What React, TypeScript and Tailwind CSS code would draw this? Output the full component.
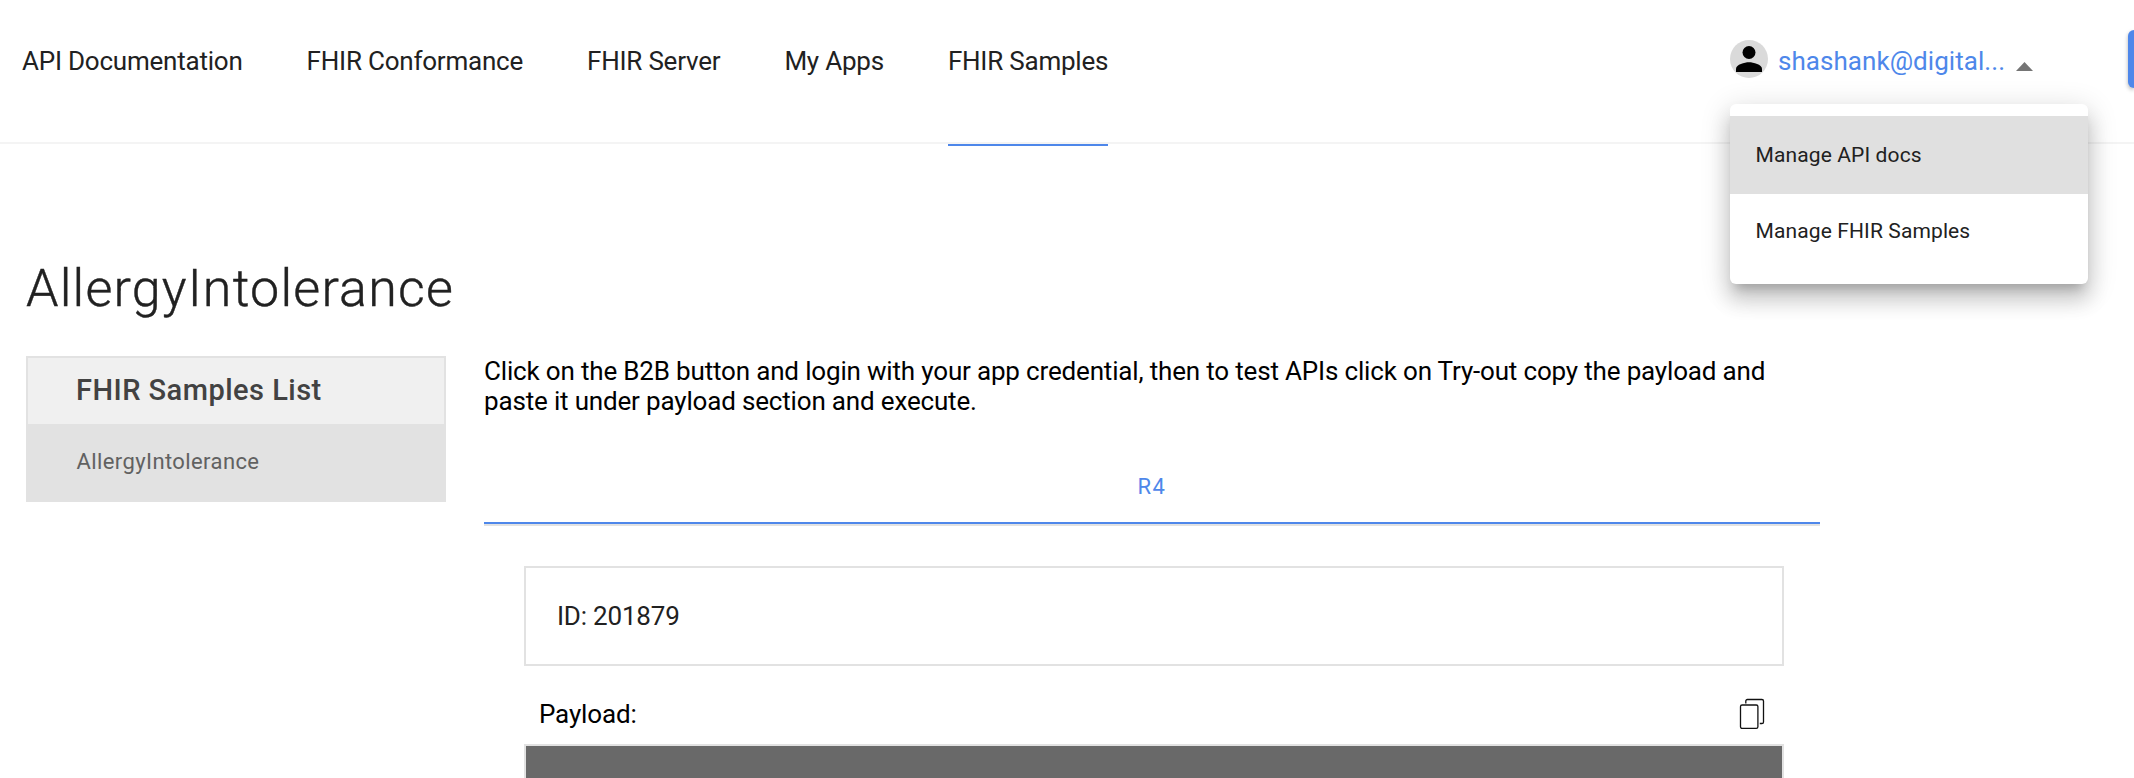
const navItems = ["API Documentation", "FHIR Conformance", "FHIR Server", "My Apps", "FHIR Samples"];

function Header() {
  return (
    <header className="relative flex h-[144px] items-start border-b-2 border-[#f4f4f4] pl-[22px]">
      <nav className="flex gap-[64px] text-[26px] leading-[30px] tracking-[-0.22px] text-[#212121]">
        {navItems.map((item, i) => (
          <a
            key={item}
            className={
              i === 4
                ? "h-[146px] border-b-2 border-[#4e87ea] pt-[46px] whitespace-nowrap"
                : "h-[146px] pt-[46px] whitespace-nowrap"
            }
          >
            {item}
          </a>
        ))}
      </nav>
      <div className="ml-auto flex w-[404px] shrink-0 items-start">
        <span className="mt-[40px] flex size-[38px] items-center justify-center rounded-full bg-[#dadada]">
          <svg viewBox="0 0 38 38" className="size-[38px]">
            <circle cx="19" cy="12.5" r="6.5" />
            <path d="M6 32v-3.2c0-4.4 8.7-6.6 13-6.6s13 2.2 13 6.6V32z" />
          </svg>
        </span>
        <span className="mt-[46px] ml-[10px] w-[226px] text-[26px] leading-[30px] tracking-[0.05px] whitespace-nowrap text-[#4e87ea]">
          shashank@digital...
        </span>
        <svg viewBox="0 0 17 9" className="mt-[62px] ml-[12px] h-[9px] w-[17px] fill-[#757575]">
          <path d="M0 9 8.5 0 17 9z" />
        </svg>
        <span className="mt-[30px] ml-auto h-[58px] w-[6px] rounded-l-[6px] bg-[#4e87ea] shadow-[0_2px_4px_rgba(0,0,0,0.3)]" />
      </div>
      <div className="absolute top-[104px] right-[46px] h-[180px] w-[358px] rounded-[6px] bg-white pt-[12px] text-[21px] tracking-[0.12px] text-[#212121] shadow-[0_10px_10px_-6px_rgba(0,0,0,0.2),0_16px_20px_2px_rgba(0,0,0,0.14),0_6px_28px_4px_rgba(0,0,0,0.12)]">
        <div className="flex h-[78px] items-center bg-[#e0e0e0] pt-[2px] pl-[25.5px]">Manage API docs</div>
        <div className="flex h-[74px] items-center pt-[2px] pl-[25.5px]">Manage FHIR Samples</div>
      </div>
    </header>
  );
}

function Sidebar() {
  return (
    <aside className="h-[146px] w-[420px] border-2 border-[#e2e2e2] bg-[#e2e2e2]">
      <h2 className="flex h-[66px] items-center bg-[#f0f0f0] pl-[48px] text-[29px] font-medium tracking-[0.47px] text-[#424242]">
        FHIR Samples List
      </h2>
      <div className="flex h-[74px] items-center pl-[48.5px] text-[22px] tracking-[0.4px] text-[#616161]">
        AllergyIntolerance
      </div>
    </aside>
  );
}

function CopyIcon() {
  return (
    <svg viewBox="0 0 26 32" className="h-[32px] w-[26px] fill-none stroke-[#111111]" strokeWidth="1.3">
      <path d="M6.8 5.5V3.1a1.6 1.6 0 0 1 1.6-1.6h14.500a1.600 1.600 0 0 1 1.600 1.600v20.800a1.600 1.600 0 0 1-1.600 1.600h-2.100" />
      <rect x="1.5" y="7" width="17.4" height="23.400" rx="1.600" />
    </svg>
  );
}

export default function App() {
  return (
    <div className="h-[778px] overflow-hidden bg-white font-['Roboto',sans-serif]">
      <Header />
      <h1 className="mt-[113px] ml-[26px] h-[64px] text-[52px] leading-[64px] font-light tracking-[1.2px] text-[#212121] [-webkit-text-stroke:0.4px_#212121]">
        AllergyIntolerance
      </h1>
      <div className="mt-[35px] flex gap-[38px] pl-[26px]">
        <Sidebar />
        <main className="w-[1336px]">
          <p className="h-[102px] text-[26px] leading-[30px] tracking-[-0.17px] text-black">
            Click on the B2B button and login with your app credential, then to test APIs click on Try-out copy the payload and
            <br />
            paste it under payload section and execute.
          </p>
          <div className="flex h-[66px] items-start justify-center border-b-2 border-[#4e87ea] pt-[15px] text-[22px] leading-[28px] tracking-[1.5px] text-[#4e87ea]">
            R4
          </div>
          <div className="h-[2px] bg-[#e2e2e2]" />
          <div className="mt-[40px] ml-[40px] w-[1260px]">
            <div className="flex h-[100px] items-center border-2 border-[#e2e2e2] pl-[31px] text-[26px] tracking-[-0.2px] text-[#212121]">
              ID: 201879
            </div>
            <div className="flex h-[78px] items-center justify-between pt-[18px] pr-[19px] pl-[15px] text-[26px] tracking-[-0.15px] text-black">
              Payload:
              <CopyIcon />
            </div>
            <div className="h-[60px] border-2 border-[#e2e2e2] bg-[#696969]" />
          </div>
        </main>
      </div>
    </div>
  );
}
